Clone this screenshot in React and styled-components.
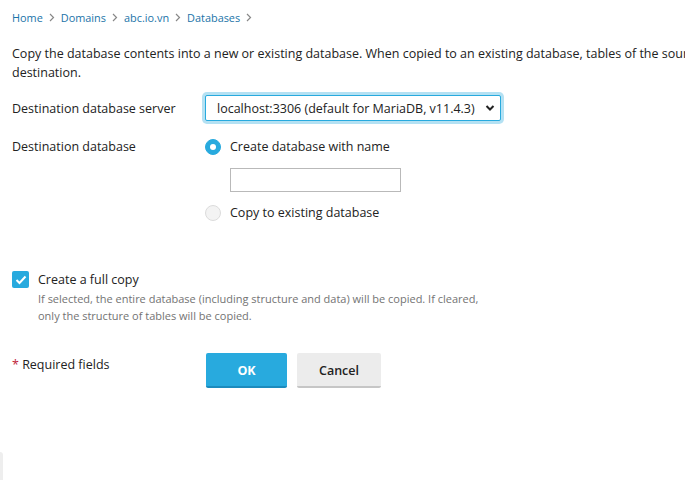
import styled, { createGlobalStyle } from "styled-components";

const GlobalStyle = createGlobalStyle`
  html, body {
    margin: 0;
    padding: 0;
    overflow: hidden;
    background: #fff;
  }
  body {
    font-family: "Open Sans", "Noto Sans", sans-serif;
    font-size: 12.5px;
    color: #222;
  }
`;

const Page = styled.div`
  position: relative;
  width: 685px;
  height: 480px;
  padding: 9px 0 0 12px;
  box-sizing: border-box;
`;

const Breadcrumbs = styled.nav`
  display: flex;
  align-items: center;
  gap: 6px;
  font-size: 10.9px;
  line-height: 17px;
`;

const Crumb = styled.a`
  color: #1a73a8;
  text-decoration: none;
`;

const Sep = styled.span`
  display: inline-flex;
  align-items: center;
`;

const Intro = styled.p`
  margin: 18px 0 13px;
  line-height: 19px;
  white-space: nowrap;
`;

const Row = styled.div`
  display: grid;
  grid-template-columns: 193px 1fr;
  align-items: ${({ $top }) => ($top ? "start" : "center")};
  margin-bottom: ${({ $gap }) => $gap || 0}px;
`;

const Label = styled.div`
  line-height: 19px;
`;

const SelectBox = styled.div`
  width: 296px;
  height: 26px;
  box-sizing: border-box;
  border: 1px solid #28aade;
  box-shadow: 0 0 0 3px rgba(40, 170, 222, 0.35);
  border-radius: 2px;
  display: flex;
  align-items: center;
  justify-content: space-between;
  padding: 0 5px 0 11px;
  background: #fff;
`;

const Options = styled.div`
  display: flex;
  flex-direction: column;
`;

const RadioLine = styled.label`
  display: flex;
  align-items: center;
  gap: 9px;
  line-height: 19px;
`;

const Radio = styled.span`
  width: 16px;
  height: 16px;
  border-radius: 50%;
  box-sizing: border-box;
  display: inline-flex;
  align-items: center;
  justify-content: center;
  background: ${({ $on }) => ($on ? "#28aade" : "#f3f3f3")};
  border: 1px solid ${({ $on }) => ($on ? "#28aade" : "#dcdcdc")};
  &::after {
    content: "";
    width: 6px;
    height: 6px;
    border-radius: 50%;
    background: #fff;
    display: ${({ $on }) => ($on ? "block" : "none")};
  }
`;

const NameInput = styled.div`
  width: 171px;
  height: 24px;
  box-sizing: border-box;
  border: 1px solid #b9b9b9;
  margin: 12px 0 11px 25px;
  background: #fff;
`;

const CheckRow = styled.div`
  display: flex;
  align-items: flex-start;
  gap: 9px;
  margin-top: 49px;
`;

const Check = styled.span`
  width: 17px;
  height: 17px;
  border-radius: 2px;
  background: #28aade;
  display: inline-flex;
  align-items: center;
  justify-content: center;
  flex-shrink: 0;
`;

const CheckText = styled.div`
  display: flex;
  flex-direction: column;
`;

const CheckLabel = styled.div`
  line-height: 19px;
  margin-top: -1px;
`;

const Hint = styled.div`
  font-size: 11px;
  line-height: 17px;
  color: #737373;
  margin-top: 1px;
  width: 446px;
`;

const Footer = styled.div`
  display: grid;
  grid-template-columns: 194px auto;
  align-items: start;
  margin-top: 29px;
`;

const Required = styled.div`
  line-height: 19px;
  padding-top: 2px;
`;

const Star = styled.span`
  color: #c0233a;
`;

const Buttons = styled.div`
  display: flex;
  gap: 10px;
`;

const Button = styled.button`
  height: 35px;
  min-width: ${({ $w }) => $w}px;
  border: none;
  border-bottom: 2px solid ${({ $primary }) => ($primary ? "#1c8bbd" : "#c6c6c6")};
  border-radius: 2px;
  background: ${({ $primary }) => ($primary ? "#28aade" : "#ececec")};
  color: ${({ $primary }) => ($primary ? "#fff" : "#222")};
  font-family: "Open Sans", "Noto Sans", sans-serif;
  font-size: 12.5px;
  font-weight: ${({ $primary }) => ($primary ? 700 : 600)};
  padding: 2px 0 0;
  cursor: pointer;
`;

const EdgeTab = styled.div`
  position: absolute;
  left: -6px;
  top: 452px;
  width: 9px;
  height: 40px;
  border-radius: 3px;
  background: #eeeeee;
`;

const Chevron = () => (
  <Sep>
    <svg width="6" height="9" viewBox="0 0 6 9">
      <path d="M1 1 L4.5 4.5 L1 8" fill="none" stroke="#888" strokeWidth="1.2" />
    </svg>
  </Sep>
);

export default function App() {
  return (
    <>
      <GlobalStyle />
      <Page>
        <Breadcrumbs>
          <Crumb href="#">Home</Crumb>
          <Chevron />
          <Crumb href="#">Domains</Crumb>
          <Chevron />
          <Crumb href="#">abc.io.vn</Crumb>
          <Chevron />
          <Crumb href="#">Databases</Crumb>
          <Chevron />
        </Breadcrumbs>

        <Intro>
          Copy the database contents into a new or existing database. When copied to an existing
          database, tables of the source database will overwrite tables with the same names in the
          <br />
          destination.
        </Intro>

        <Row $gap={16}>
          <Label>Destination database server</Label>
          <SelectBox>
            <span>localhost:3306 (default for MariaDB, v11.4.3)</span>
            <svg width="10" height="10" viewBox="0 0 10 10">
              <path d="M1.5 3 L5 6.5 L8.5 3" fill="none" stroke="#222" strokeWidth="2" />
            </svg>
          </SelectBox>
        </Row>

        <Row $top>
          <Label>Destination database</Label>
          <Options>
            <RadioLine>
              <Radio $on />
              Create database with name
            </RadioLine>
            <NameInput />
            <RadioLine>
              <Radio />
              Copy to existing database
            </RadioLine>
          </Options>
        </Row>

        <CheckRow>
          <Check>
            <svg width="12" height="10" viewBox="0 0 12 10">
              <path d="M1.5 5 L4.5 8 L10.5 1.5" fill="none" stroke="#fff" strokeWidth="2" />
            </svg>
          </Check>
          <CheckText>
            <CheckLabel>Create a full copy</CheckLabel>
            <Hint>
              If selected, the entire database (including structure and data) will be copied. If
              cleared, only the structure of tables will be copied.
            </Hint>
          </CheckText>
        </CheckRow>

        <Footer>
          <Required>
            <Star>*</Star> Required fields
          </Required>
          <Buttons>
            <Button $primary $w={81}>OK</Button>
            <Button $w={84}>Cancel</Button>
          </Buttons>
        </Footer>

        <EdgeTab />
      </Page>
    </>
  );
}
